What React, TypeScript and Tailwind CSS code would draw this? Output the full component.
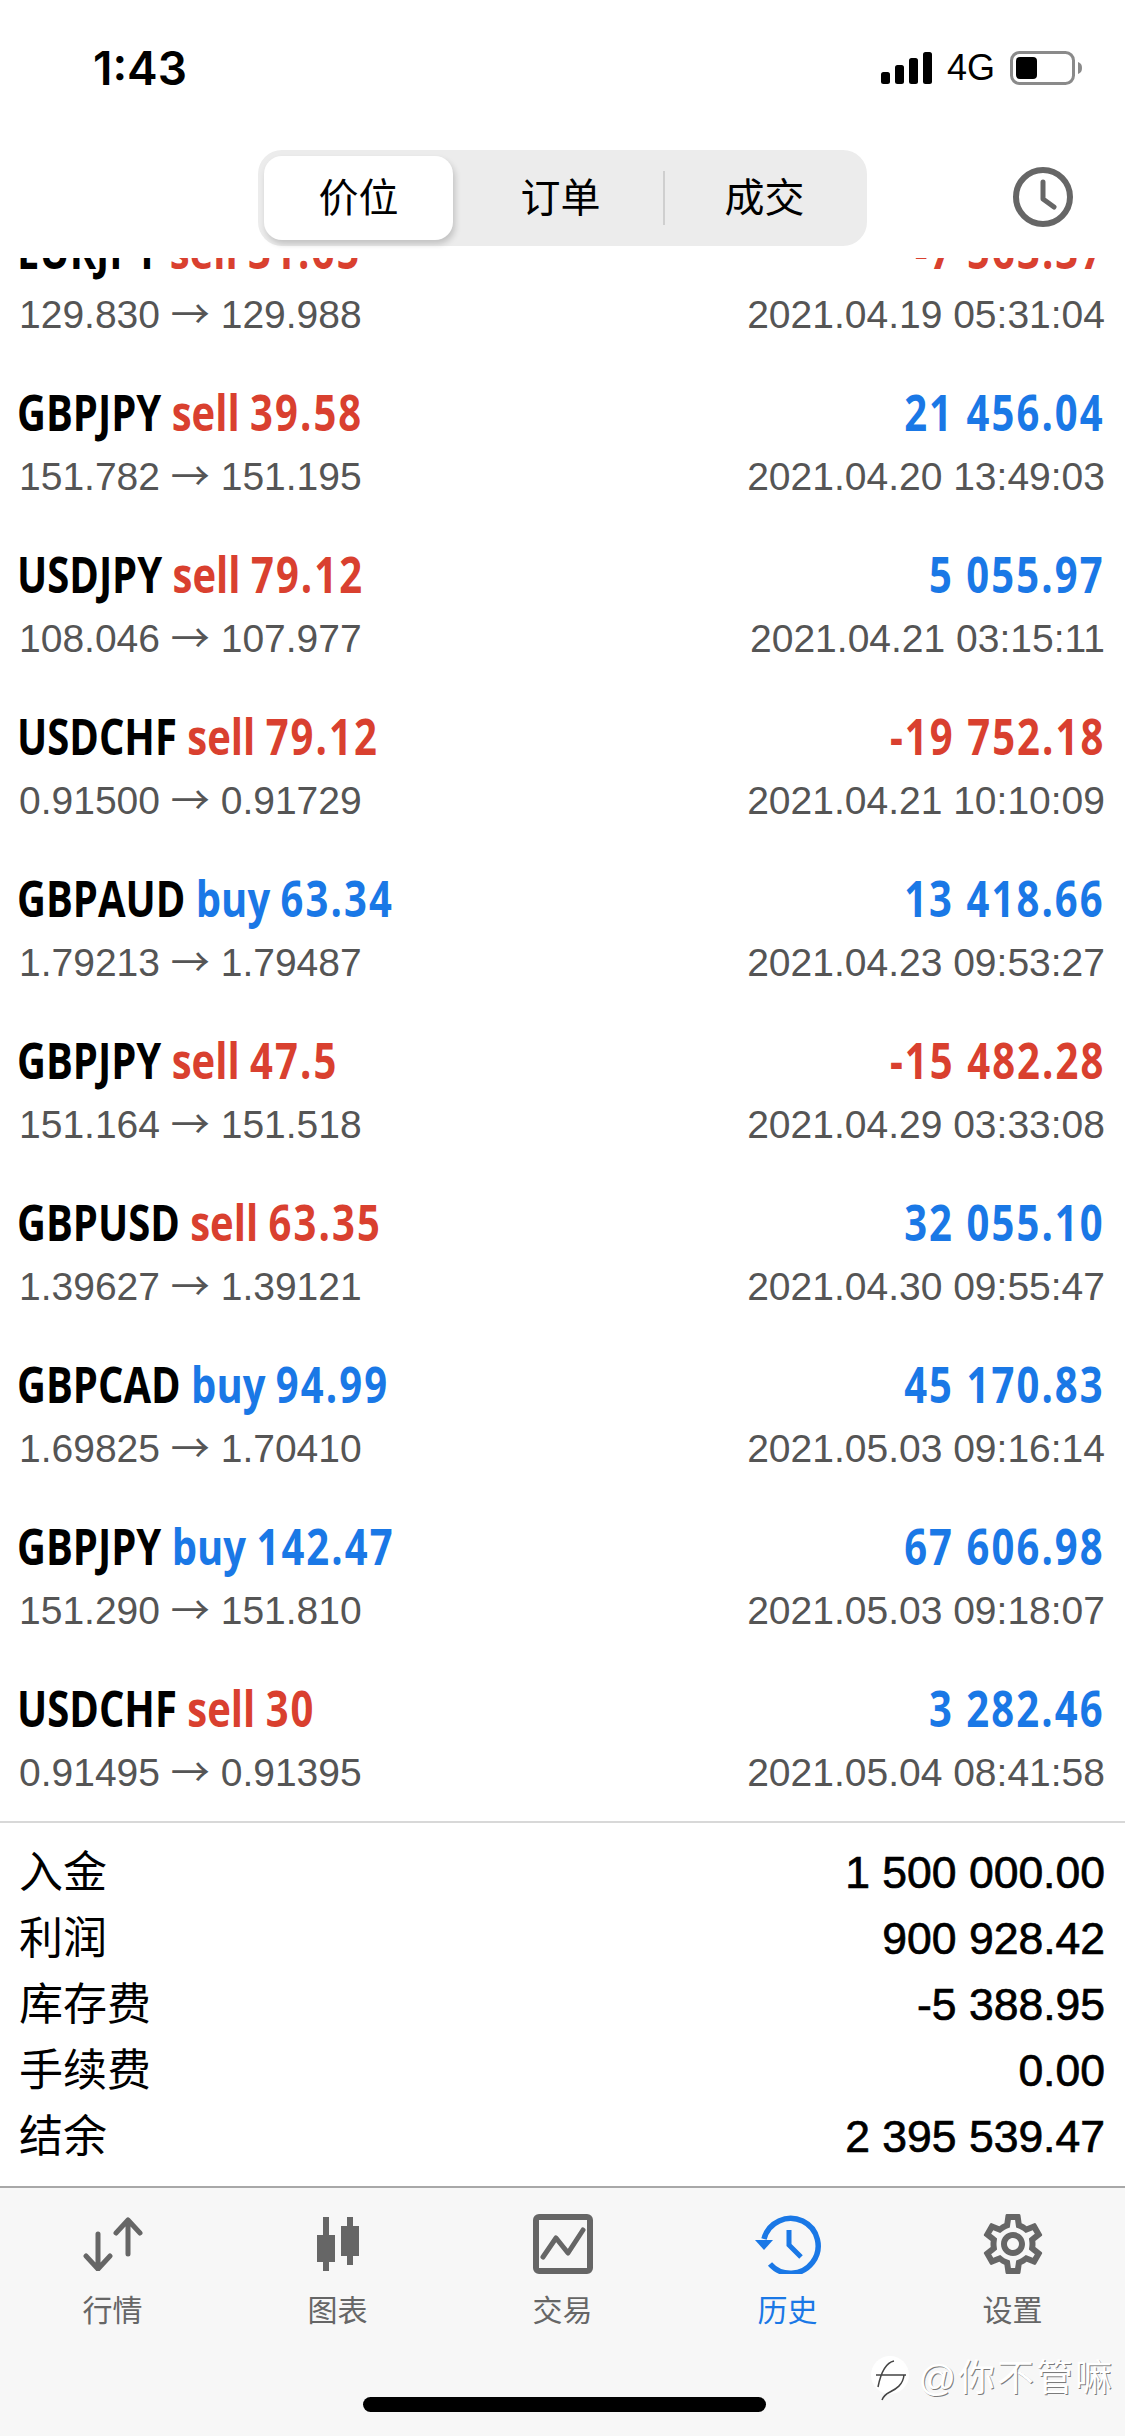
import React from 'react'
import { MdOutlineSettings } from 'react-icons/md'

type Trade = {
  pair: string
  side: 'buy' | 'sell'
  lots: string
  from: string
  to: string
  profit: string
  time: string
  loss?: boolean
}

const trades: Trade[] = [
  { pair: 'EURJPY', side: 'sell', lots: '31.65', from: '129.830', to: '129.988', profit: '-7 563.37', time: '2021.04.19 05:31:04', loss: true },
  { pair: 'GBPJPY', side: 'sell', lots: '39.58', from: '151.782', to: '151.195', profit: '21 456.04', time: '2021.04.20 13:49:03' },
  { pair: 'USDJPY', side: 'sell', lots: '79.12', from: '108.046', to: '107.977', profit: '5 055.97', time: '2021.04.21 03:15:11' },
  { pair: 'USDCHF', side: 'sell', lots: '79.12', from: '0.91500', to: '0.91729', profit: '-19 752.18', time: '2021.04.21 10:10:09', loss: true },
  { pair: 'GBPAUD', side: 'buy', lots: '63.34', from: '1.79213', to: '1.79487', profit: '13 418.66', time: '2021.04.23 09:53:27' },
  { pair: 'GBPJPY', side: 'sell', lots: '47.5', from: '151.164', to: '151.518', profit: '-15 482.28', time: '2021.04.29 03:33:08', loss: true },
  { pair: 'GBPUSD', side: 'sell', lots: '63.35', from: '1.39627', to: '1.39121', profit: '32 055.10', time: '2021.04.30 09:55:47' },
  { pair: 'GBPCAD', side: 'buy', lots: '94.99', from: '1.69825', to: '1.70410', profit: '45 170.83', time: '2021.05.03 09:16:14' },
  { pair: 'GBPJPY', side: 'buy', lots: '142.47', from: '151.290', to: '151.810', profit: '67 606.98', time: '2021.05.03 09:18:07' },
  { pair: 'USDCHF', side: 'sell', lots: '30', from: '0.91495', to: '0.91395', profit: '3 282.46', time: '2021.05.04 08:41:58' },
]

const summary = [
  ['入金', '1 500 000.00'],
  ['利润', '900 928.42'],
  ['库存费', '-5 388.95'],
  ['手续费', '0.00'],
  ['结余', '2 395 539.47'],
]

const QuotesIcon = () => (
  <svg width="60" height="54" viewBox="0 0 60 54" fill="none" stroke="#666" strokeWidth="5" strokeLinecap="round" strokeLinejoin="round">
    <path d="M15 17v35M3 39l12 13 12-13" />
    <path d="M45 37V3M33 16L45 3l12 13" />
  </svg>
)

const ChartIcon = () => (
  <svg width="42" height="54" viewBox="0 0 42 54" fill="#666">
    <rect x="6" y="0" width="6" height="54" />
    <rect x="0" y="18" width="18" height="27" />
    <rect x="30" y="0" width="6" height="48" />
    <path fillRule="evenodd" d="M24 9h18v30H24zM30 15v18h6V15z" />
  </svg>
)

const TradeIcon = () => (
  <svg width="60" height="60" viewBox="0 0 60 60" fill="none" stroke="#666">
    <rect x="3" y="3" width="54" height="54" rx="3" strokeWidth="6" />
    <path d="M10 43l13-19 12 15 15-23" strokeWidth="5" strokeLinecap="round" strokeLinejoin="round" />
  </svg>
)

const HistoryIcon = () => (
  <svg width="66" height="60" viewBox="0 0 66 60" fill="none" stroke="#1a78e6" strokeWidth="5.5">
    <path d="M9 25A27.5 27.5 0 1 1 15 50" />
    <path d="M0 26h18l-9 10z" fill="#1a78e6" stroke="none" />
    <path d="M34 16v15l12 12" strokeWidth="5" />
  </svg>
)

const SettingsIcon = () => <MdOutlineSettings size={72} color="#666" />

const tabs = [
  { label: '行情', icon: <QuotesIcon /> },
  { label: '图表', icon: <ChartIcon /> },
  { label: '交易', icon: <TradeIcon /> },
  { label: '历史', icon: <HistoryIcon />, active: true },
  { label: '设置', icon: <SettingsIcon /> },
]

const App: React.FC = () => {
  return (
    <div className="w-[1125px] h-[2436px] bg-white flex flex-col overflow-hidden font-['Liberation_Sans','Noto_Sans_CJK_SC',sans-serif]">
      {/* status bar */}
      <div className="h-[150px] shrink-0 flex items-start justify-between pt-[44px] pl-[93px] pr-[43px]">
        <span className="text-[46px] leading-[48px] font-semibold text-black font-['Inter',sans-serif]">1:43</span>
        <div className="flex items-center gap-[15px] h-[48px]">
          <svg width="51" height="32" viewBox="0 0 51 32" fill="#000">
            <rect x="0" y="20" width="9" height="12" rx="2.5" />
            <rect x="14" y="13" width="9" height="19" rx="2.5" />
            <rect x="28" y="6" width="9" height="26" rx="2.5" />
            <rect x="42" y="0" width="9" height="32" rx="2.5" />
          </svg>
          <span className="text-[36px] leading-none text-black">4G</span>
          <svg width="72" height="34" viewBox="0 0 72 34" fill="none">
            <rect x="1.5" y="1.5" width="62" height="31" rx="8" stroke="#8a8a8a" strokeWidth="3" />
            <rect x="6" y="6" width="21" height="22" rx="4" fill="#000" />
            <path d="M68 11c3 1 4 3 4 6s-1 5-4 6z" fill="#8a8a8a" />
          </svg>
        </div>
      </div>

      {/* segmented control */}
      <div className="h-[108px] shrink-0 flex items-start pl-[258px] pr-[51px] justify-between">
        <div className="w-[609px] h-[96px] bg-[#ececec] rounded-[24px] flex items-center px-[6px] text-[40px] text-black">
          <div className="w-[189px] h-[84px] bg-white rounded-[18px] shadow-[2px_4px_6px_rgba(0,0,0,0.18)] flex items-center justify-center">价位</div>
          <div className="w-[210px] pl-[5px] flex items-center justify-center">订单</div>
          <div className="w-[2px] h-[54px] bg-[#cfcfcf]" />
          <div className="flex-1 pl-[3px] flex items-center justify-center">成交</div>
        </div>
        <svg width="62" height="62" viewBox="0 0 62 62" fill="none" stroke="#666" strokeLinecap="round" strokeLinejoin="round" className="mt-[16px]">
          <circle cx="31" cy="31" r="27" strokeWidth="6" />
          <path d="M31 16v17l11 8" strokeWidth="5" />
        </svg>
      </div>

      {/* trade list, first row scrolled under the header */}
      <div className="h-[1563px] shrink-0 overflow-hidden">
        <div className="-mt-[39px]">
          {trades.map((t, i) => (
            <div key={i} className="h-[162px] pl-[19px] pr-[20px] flex flex-col">
              <div className="flex justify-between h-[62px] items-center whitespace-nowrap text-[50px] font-bold font-['Open_Sans',sans-serif]">
                <span className="inline-block -ml-[2px] origin-left scale-x-[0.8]">
                  <span className="text-black">{t.pair}</span>{' '}
                  <span className={t.side === 'buy' ? 'text-[#1a78e6]' : 'text-[#d9402f]'}>
                    {t.side} <span className="tracking-[2.6px]">{t.lots}</span>
                  </span>
                </span>
                <span className={`inline-block origin-right scale-x-[0.8] tracking-[2.6px] ${t.loss ? 'text-[#d9402f]' : 'text-[#1a78e6]'}`}>{t.profit}</span>
              </div>
              <div className="flex justify-between h-[68px] items-center whitespace-nowrap text-[39px] leading-[46px] text-[#555]">
                <span>
                  {t.from} <span className="leading-none font-['Noto_Sans_CJK_SC',sans-serif]">→</span> {t.to}
                </span>
                <span>{t.time}</span>
              </div>
            </div>
          ))}
        </div>
      </div>

      {/* account summary */}
      <div className="h-[365px] shrink-0 border-t-2 border-[#d8d8d8] pt-[17px] pl-[19px] pr-[20px]">
        {summary.map(([label, value]) => (
          <div key={label} className="h-[66px] flex items-center justify-between">
            <span className="text-[44px] text-black">{label}</span>
            <span className="text-[44.5px] text-black [-webkit-text-stroke:0.7px_black]">{value}</span>
          </div>
        ))}
      </div>

      {/* tab bar */}
      <div className="relative flex-1 bg-[#f7f7f7] border-t-2 border-[#a8a8a8]">
        <div className="grid grid-cols-5 pt-[23px]">
          {tabs.map(tab => (
            <div key={tab.label} className="flex flex-col items-center">
              <div className="h-[66px] flex items-center justify-center">{tab.icon}</div>
              <span className={`mt-[14px] text-[30px] leading-[40px] ${tab.active ? 'text-[#1a78e6]' : 'text-[#666]'}`}>{tab.label}</span>
            </div>
          ))}
        </div>
        <div className="absolute bottom-[24px] left-[363px] w-[403px] h-[15px] rounded-full bg-black" />
        {/* watermark */}
        <div className="absolute top-[167px] right-[11px] flex items-center gap-[4px] text-[37px] tracking-[2px] leading-none text-white [text-shadow:1px_1px_0_rgba(0,0,0,0.5)]">
          <svg width="44" height="46" viewBox="0 0 44 46" fill="none">
            <circle cx="20" cy="20" r="19" fill="#fff" />
            <path d="M8 32c2-10 6-24 16-26M6 20h30M34 20c-1 10-8 14-14 17-4 2-7 5-8 8" stroke="#444" strokeWidth="1.5" />
          </svg>
          <span>@你不管嘛</span>
        </div>
      </div>
    </div>
  )
}

export default App
